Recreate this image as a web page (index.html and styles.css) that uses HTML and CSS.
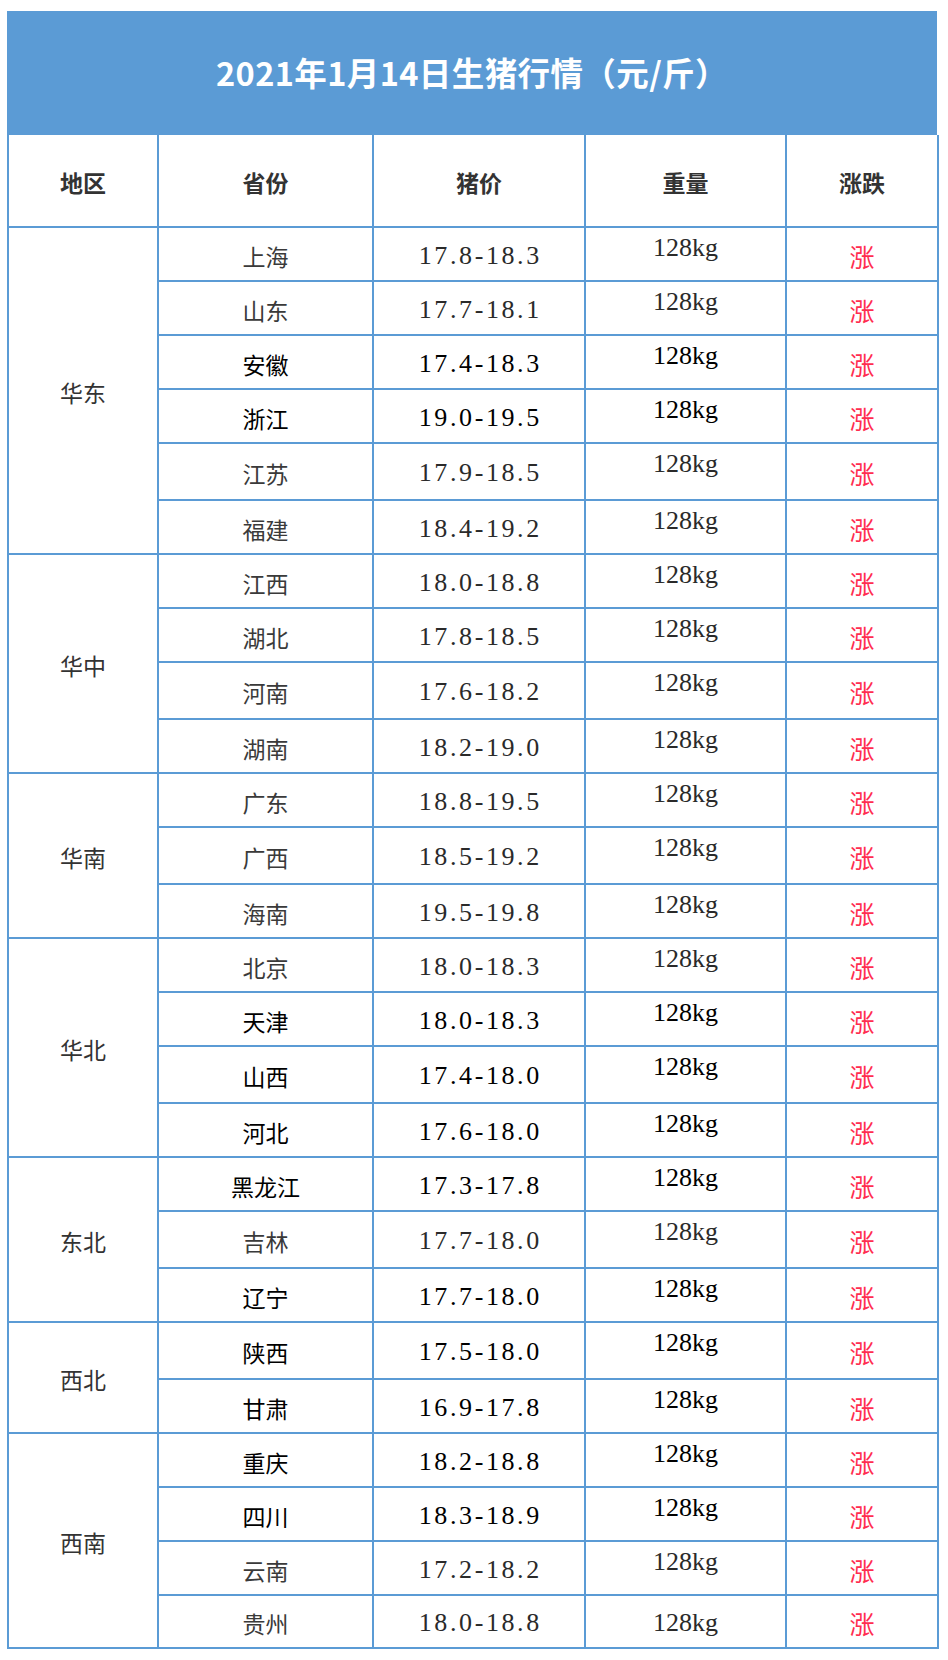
FILE: index.html
```html
<!DOCTYPE html>
<html lang="zh-CN">
<head>
<meta charset="utf-8">
<title>2021年1月14日生猪行情</title>
<link rel="stylesheet" href="styles.css">
</head>
<body>
<div class="sheet">
  <div class="banner">2021年1月14日生猪行情（元/斤）</div>
  <table class="grid">
    <colgroup>
      <col class="c-region"><col class="c-prov"><col class="c-price"><col class="c-weight"><col class="c-trend">
    </colgroup>
    <thead>
      <tr class="head"><th>地区</th><th>省份</th><th>猪价</th><th>重量</th><th>涨跌</th></tr>
    </thead>
    <tbody>
      <tr class="r"><td class="region" rowspan="6">华东</td><td class="prov">上海</td><td class="price">17.8-18.3</td><td class="weight">128kg</td><td class="up">涨</td></tr>
      <tr class="r"><td class="prov">山东</td><td class="price">17.7-18.1</td><td class="weight">128kg</td><td class="up">涨</td></tr>
      <tr class="r dark"><td class="prov">安徽</td><td class="price">17.4-18.3</td><td class="weight">128kg</td><td class="up">涨</td></tr>
      <tr class="r dark"><td class="prov">浙江</td><td class="price">19.0-19.5</td><td class="weight">128kg</td><td class="up">涨</td></tr>
      <tr class="r tall"><td class="prov">江苏</td><td class="price">17.9-18.5</td><td class="weight">128kg</td><td class="up">涨</td></tr>
      <tr class="r"><td class="prov">福建</td><td class="price">18.4-19.2</td><td class="weight">128kg</td><td class="up">涨</td></tr>

      <tr class="r"><td class="region" rowspan="4">华中</td><td class="prov">江西</td><td class="price">18.0-18.8</td><td class="weight">128kg</td><td class="up">涨</td></tr>
      <tr class="r"><td class="prov">湖北</td><td class="price">17.8-18.5</td><td class="weight">128kg</td><td class="up">涨</td></tr>
      <tr class="r tall"><td class="prov">河南</td><td class="price">17.6-18.2</td><td class="weight">128kg</td><td class="up">涨</td></tr>
      <tr class="r"><td class="prov">湖南</td><td class="price">18.2-19.0</td><td class="weight">128kg</td><td class="up">涨</td></tr>

      <tr class="r"><td class="region" rowspan="3">华南</td><td class="prov">广东</td><td class="price">18.8-19.5</td><td class="weight">128kg</td><td class="up">涨</td></tr>
      <tr class="r tall"><td class="prov">广西</td><td class="price">18.5-19.2</td><td class="weight">128kg</td><td class="up">涨</td></tr>
      <tr class="r"><td class="prov">海南</td><td class="price">19.5-19.8</td><td class="weight">128kg</td><td class="up">涨</td></tr>

      <tr class="r"><td class="region" rowspan="4">华北</td><td class="prov">北京</td><td class="price">18.0-18.3</td><td class="weight">128kg</td><td class="up">涨</td></tr>
      <tr class="r dark"><td class="prov">天津</td><td class="price">18.0-18.3</td><td class="weight">128kg</td><td class="up">涨</td></tr>
      <tr class="r tall dark"><td class="prov">山西</td><td class="price">17.4-18.0</td><td class="weight">128kg</td><td class="up">涨</td></tr>
      <tr class="r dark"><td class="prov">河北</td><td class="price">17.6-18.0</td><td class="weight">128kg</td><td class="up">涨</td></tr>

      <tr class="r dark"><td class="region" rowspan="3">东北</td><td class="prov">黑龙江</td><td class="price">17.3-17.8</td><td class="weight">128kg</td><td class="up">涨</td></tr>
      <tr class="r tall"><td class="prov">吉林</td><td class="price">17.7-18.0</td><td class="weight">128kg</td><td class="up">涨</td></tr>
      <tr class="r dark"><td class="prov">辽宁</td><td class="price">17.7-18.0</td><td class="weight">128kg</td><td class="up">涨</td></tr>

      <tr class="r tall dark"><td class="region" rowspan="2">西北</td><td class="prov">陕西</td><td class="price">17.5-18.0</td><td class="weight">128kg</td><td class="up">涨</td></tr>
      <tr class="r dark"><td class="prov">甘肃</td><td class="price">16.9-17.8</td><td class="weight">128kg</td><td class="up">涨</td></tr>

      <tr class="r dark"><td class="region" rowspan="4">西南</td><td class="prov">重庆</td><td class="price">18.2-18.8</td><td class="weight">128kg</td><td class="up">涨</td></tr>
      <tr class="r dark"><td class="prov">四川</td><td class="price">18.3-18.9</td><td class="weight">128kg</td><td class="up">涨</td></tr>
      <tr class="r"><td class="prov">云南</td><td class="price">17.2-18.2</td><td class="weight">128kg</td><td class="up">涨</td></tr>
      <tr class="r last"><td class="prov">贵州</td><td class="price">18.0-18.8</td><td class="weight">128kg</td><td class="up">涨</td></tr>
    </tbody>
  </table>
</div>
</body>
</html>
```
FILE: styles.css
```css
html, body {
  margin: 0;
  padding: 0;
  background: #ffffff;
}

body {
  font-family: "Noto Sans CJK SC", "Noto Sans", sans-serif;
  color: #333333;
}

.sheet {
  width: 930px;
  margin: 11px 0 0 7px;
}

.banner {
  height: 124px;
  background: #5b9bd5;
  color: #ffffff;
  font-family: "Noto Sans CJK SC", sans-serif;
  font-weight: 700;
  font-size: 32.5px;
  letter-spacing: 0.4px;
  display: flex;
  align-items: center;
  justify-content: center;
  padding-bottom: 4px;
  box-sizing: border-box;
}

.grid {
  width: 930px;
  border-collapse: collapse;
  table-layout: fixed;
  border: 2px solid #5b9bd5;
  border-top: none;
}

.c-region { width: 150px; }
.c-prov { width: 215px; }
.c-price { width: 212px; }
.c-weight { width: 201px; }
.c-trend { width: 152px; }

.grid th,
.grid td {
  border: 2px solid #5b9bd5;
  padding: 0;
  text-align: center;
}

.grid thead th {
  border-top: none;
}

.head {
  height: 92px;
}

.grid .head th {
  font-family: "Noto Sans CJK SC", sans-serif;
  font-weight: 700;
  font-size: 23px;
  color: #333333;
  padding-top: 2px;
}

.r { height: 54px; }
.r.tall { height: 57px; }
.r.last { height: 53px; }

.grid .region {
  font-size: 23px;
  color: #333333;
  padding-top: 2px;
}

.grid .prov {
  font-size: 23px;
  color: #3a3a3a;
  padding-top: 3px;
}

.grid .price {
  font-family: "Liberation Serif", "Times New Roman", serif;
  font-size: 26px;
  letter-spacing: 2.6px;
  text-indent: 2.6px;
  color: #2a2a2a;
  padding-top: 3px;
}

.grid .weight {
  font-family: "Liberation Serif", "Times New Roman", serif;
  font-size: 26px;
  color: #2a2a2a;
  vertical-align: top;
  padding-top: 5px;
}

.grid .last .weight {
  vertical-align: middle;
  padding-top: 2px;
}

.grid .up {
  font-size: 25px;
  color: #ff2d4f;
  padding-top: 3px;
}

.dark .prov,
.dark .price,
.dark .weight {
  color: #000000;
}
```
